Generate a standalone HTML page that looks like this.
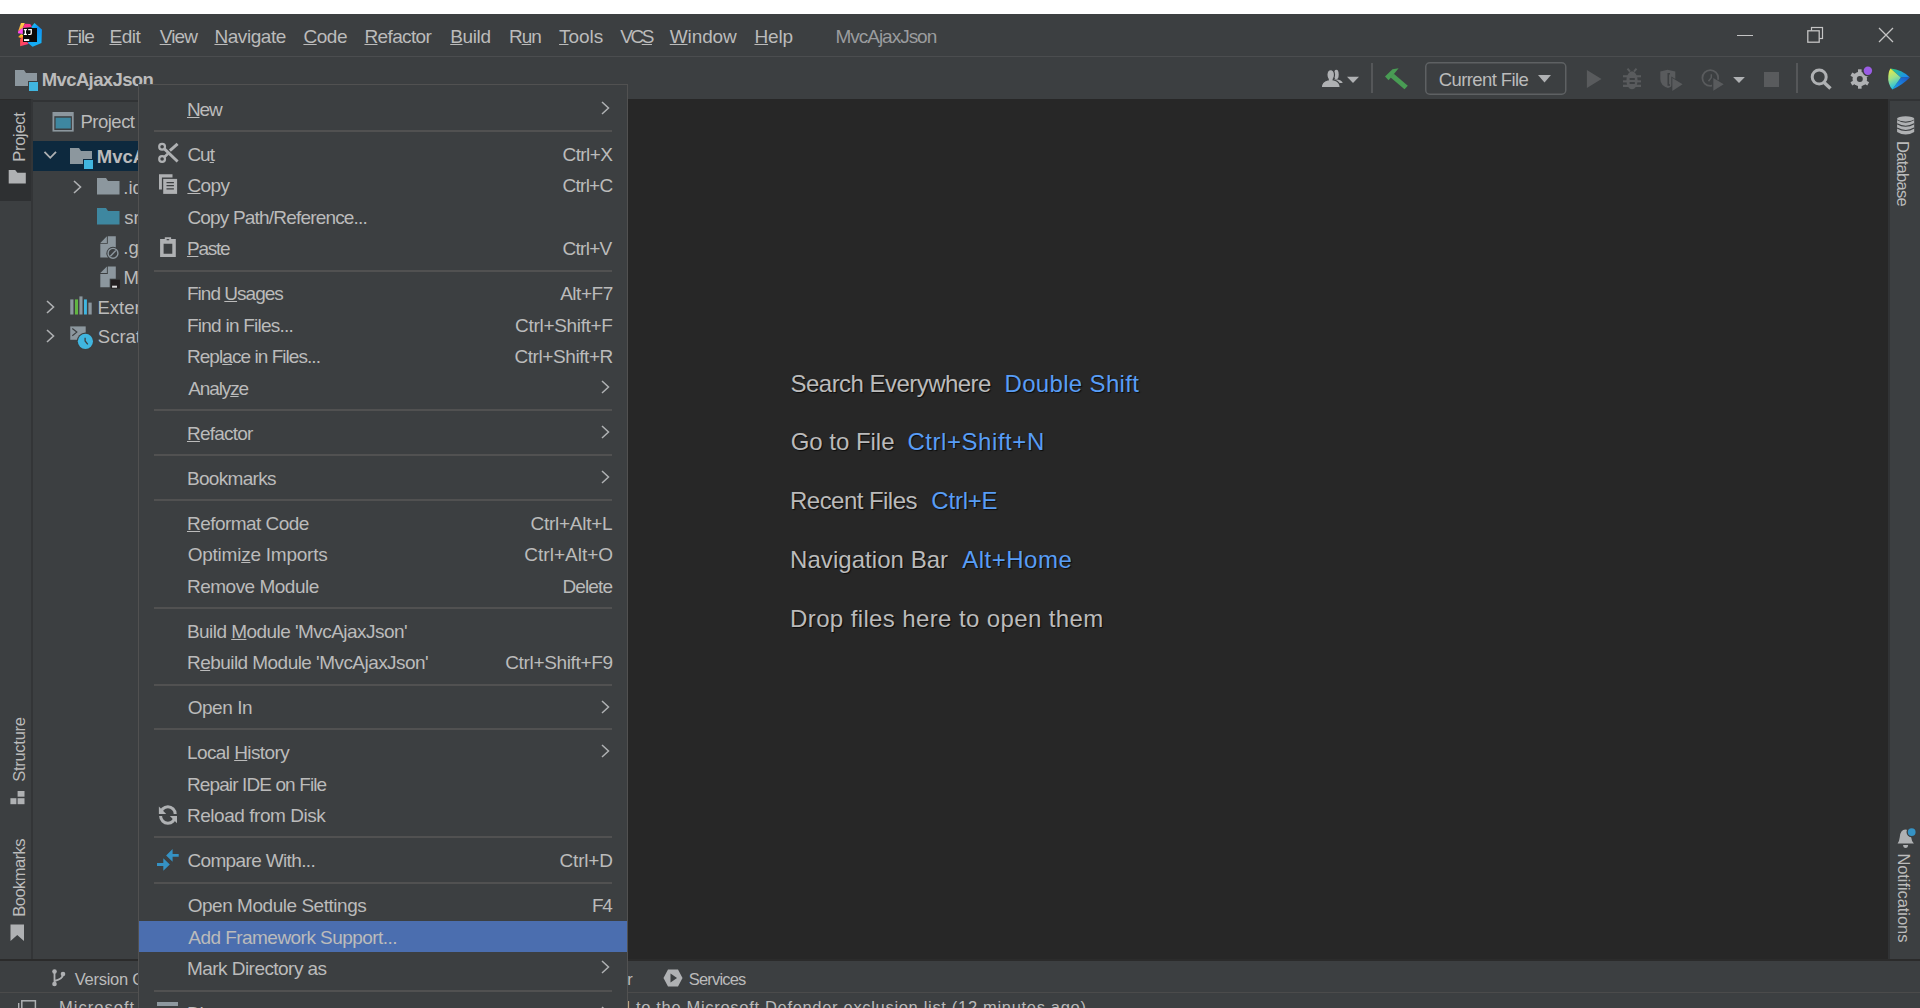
<!DOCTYPE html>
<html><head><meta charset="utf-8"><style>
html,body{margin:0;padding:0}
body{width:1920px;height:1008px;overflow:hidden;position:relative;background:#3c3f41;font-family:'Liberation Sans', sans-serif}
.t{position:absolute;white-space:pre}
u{text-decoration:underline;text-underline-offset:1px;text-decoration-thickness:1.2px}
svg{overflow:visible}
</style></head><body>
<div style="position:absolute;left:0px;top:0px;width:1920px;height:14px;background:#ffffff;"></div><div style="position:absolute;left:0px;top:56px;width:1920px;height:1px;background:#4b4d4f;"></div><div style="position:absolute;left:400px;top:99px;width:1489px;height:860px;background:#272727;"></div><div style="position:absolute;left:0px;top:99px;width:31px;height:1px;background:#2b2b2b;"></div><div style="position:absolute;left:0px;top:100px;width:31px;height:101px;background:#2e3032;"></div><div style="position:absolute;left:31px;top:99px;width:2px;height:860px;background:#333537;"></div><div style="position:absolute;left:33px;top:100px;width:400px;height:2px;background:#313335;"></div><div style="position:absolute;left:1888px;top:99px;width:2px;height:860px;background:#313335;"></div><div style="position:absolute;left:1890px;top:99px;width:30px;height:2px;background:#313335;"></div><div style="position:absolute;left:0px;top:959px;width:1920px;height:2px;background:#2b2b2b;"></div><div style="position:absolute;left:0px;top:992px;width:1920px;height:1px;background:#4b4b4b;"></div><svg style="position:absolute;left:16px;top:21px;" width="28" height="28" viewBox="16 21 28 28"><defs><linearGradient id="lg1" x1="0" y1="0" x2="0" y2="1"><stop offset="0" stop-color="#ffd04a"/><stop offset="1" stop-color="#ff9a3c"/></linearGradient><linearGradient id="lg2" x1="0" y1="0" x2="0" y2="1"><stop offset="0" stop-color="#ffe01b"/><stop offset="1" stop-color="#ff6a2a"/></linearGradient><linearGradient id="lg3" x1="0" y1="0" x2="1" y2="1"><stop offset="0" stop-color="#ff5a36"/><stop offset="1" stop-color="#ff318c"/></linearGradient><linearGradient id="lg4" x1="0" y1="0" x2="0.3" y2="1"><stop offset="0" stop-color="#22d8f6"/><stop offset="0.4" stop-color="#0d8ff5"/><stop offset="1" stop-color="#16b0f5"/></linearGradient></defs><path d="M31.9 26.3 L34.5 23 L41.9 29.5 L41.5 43 L32.6 46.8 L27.9 43 Z" fill="url(#lg4)"/><path d="M21 23 L24.8 23 L22.8 28.1 L17.9 31.8 Z" fill="url(#lg1)"/><path d="M24.8 23.7 L30.2 23.9 L31.9 26.8 L22.8 28.1 Z" fill="#ff318c"/><path d="M17.9 31.8 L22.8 27.8 L22.8 33.9 L18.1 33.2 Z" fill="#ff45ed"/><path d="M18.1 36.9 L21.1 34.2 L23 34.9 L23 38.9 Z" fill="url(#lg2)"/><path d="M20.1 38.9 L23 36.9 L27.9 43 L28.5 44 L20.1 46.3 Z" fill="url(#lg3)"/><rect x="23" y="28" width="14" height="14" fill="#0c0a0a"/><path d="M23.8 29 H26.9 V30.2 H26 V33.8 H26.9 V35 H23.8 V33.8 H24.7 V30.2 H23.8 Z" fill="#fff"/><path d="M28.2 29 H31.9 V33.2 Q31.9 35.1 30 35.1 H28.2 V33.9 H29.9 Q30.6 33.9 30.6 33.1 V30.2 H28.2 Z" fill="#fff"/><rect x="24" y="39.1" width="5.2" height="1.9" fill="#fff"/></svg><div class="t" style="left:67.32px;top:26.92px;font-size:19px;line-height:19px;letter-spacing:-1.066px;color:#bbbbbb;font-weight:normal;"><u>F</u>ile</div><div class="t" style="left:109.47px;top:26.92px;font-size:19px;line-height:19px;letter-spacing:-0.484px;color:#bbbbbb;font-weight:normal;"><u>E</u>dit</div><div class="t" style="left:159.71px;top:26.92px;font-size:19px;line-height:19px;letter-spacing:-0.818px;color:#bbbbbb;font-weight:normal;"><u>V</u>iew</div><div class="t" style="left:214.47px;top:26.92px;font-size:19px;line-height:19px;letter-spacing:-0.450px;color:#bbbbbb;font-weight:normal;"><u>N</u>avigate</div><div class="t" style="left:303.41px;top:26.92px;font-size:19px;line-height:19px;letter-spacing:-0.435px;color:#bbbbbb;font-weight:normal;"><u>C</u>ode</div><div class="t" style="left:364.47px;top:26.92px;font-size:19px;line-height:19px;letter-spacing:-0.632px;color:#bbbbbb;font-weight:normal;"><u>R</u>efactor</div><div class="t" style="left:450.22px;top:26.92px;font-size:19px;line-height:19px;letter-spacing:-0.372px;color:#bbbbbb;font-weight:normal;"><u>B</u>uild</div><div class="t" style="left:508.97px;top:26.92px;font-size:19px;line-height:19px;letter-spacing:-1.080px;color:#bbbbbb;font-weight:normal;">R<u>u</u>n</div><div class="t" style="left:559.09px;top:26.92px;font-size:19px;line-height:19px;letter-spacing:-0.063px;color:#bbbbbb;font-weight:normal;"><u>T</u>ools</div><div class="t" style="left:620.21px;top:26.92px;font-size:19px;line-height:19px;letter-spacing:-2.440px;color:#bbbbbb;font-weight:normal;">VC<u>S</u></div><div class="t" style="left:669.76px;top:26.92px;font-size:19px;line-height:19px;letter-spacing:-0.107px;color:#bbbbbb;font-weight:normal;"><u>W</u>indow</div><div class="t" style="left:754.47px;top:26.92px;font-size:19px;line-height:19px;letter-spacing:-0.125px;color:#bbbbbb;font-weight:normal;"><u>H</u>elp</div><div class="t" style="left:835.47px;top:26.92px;font-size:19px;line-height:19px;letter-spacing:-1.016px;color:#9a9c9e;font-weight:normal;">MvcAjaxJson</div><div style="position:absolute;left:1737px;top:35px;width:16px;height:1.3px;background:#c4c4c4;"></div><svg style="position:absolute;left:1807px;top:27px;" width="17" height="17" viewBox="0 0 17 17"><rect x="4.5" y="0.5" width="11" height="11" fill="none" stroke="#c4c4c4" stroke-width="1.2"/><rect x="0.8" y="3.8" width="11.4" height="11.4" fill="#3c3f41" stroke="#c4c4c4" stroke-width="1.3"/></svg><svg style="position:absolute;left:1878px;top:27px;" width="16" height="16" viewBox="0 0 16 16"><path d="M1 1 L15 15 M15 1 L1 15" stroke="#c4c4c4" stroke-width="1.3"/></svg><svg style="position:absolute;left:15px;top:70px;" width="24" height="22" viewBox="0 0 24 22"><path d="M0 0 H9 L11 3 H22 V16 H0 Z" fill="#8c979e"/><rect x="13" y="11" width="11" height="11" fill="#3c3f41"/><rect x="14" y="12" width="9" height="9" fill="#40b6e0"/></svg><div class="t" style="left:41.75px;top:70.74px;font-size:18.5px;line-height:18.5px;letter-spacing:-0.620px;color:#bbbbbb;font-weight:bold;">MvcAjaxJson</div><svg style="position:absolute;left:1318px;top:66px;" width="30" height="24" viewBox="1318 66 30 24"><ellipse cx="1336.3" cy="74.5" rx="2.4" ry="4.8" fill="#afb1b3"/><path d="M1334 79.3 Q1342 79.6 1342.7 83 L1336 83 Z" fill="#afb1b3"/><ellipse cx="1330.7" cy="74.8" rx="3.8" ry="5.1" fill="#afb1b3" stroke="#3c3f41" stroke-width="1.2"/><path d="M1321.2 87.7 Q1321.4 81.4 1327.5 80 L1334 80 Q1340.1 81.4 1340.3 87.7 Z" fill="#afb1b3" stroke="#3c3f41" stroke-width="1.2"/><rect x="1328.8" y="77.5" width="3.8" height="3.6" fill="#afb1b3"/></svg><svg style="position:absolute;left:1346px;top:76px;" width="14" height="8" viewBox="1346 76 14 8"><path d="M1347 76.8 H1359 L1353 82.9 Z" fill="#afb1b3"/></svg><div style="position:absolute;left:1371.2px;top:63px;width:1.8px;height:30px;background:#555759;"></div><svg style="position:absolute;left:1383px;top:66px;" width="27" height="25" viewBox="1383 66 27 25"><path d="M1385 76.6 L1392.5 69.2 L1398.6 68.3 L1395.2 72.6 L1388.6 80.3 Z" fill="#499c54"/><path d="M1390.3 77.3 L1393.8 73.8 L1407.8 85.8 L1404.5 89.3 Z" fill="#499c54"/></svg><svg style="position:absolute;left:1425px;top:62px;" width="142" height="33" viewBox="0 0 142 33"><rect x="0.75" y="0.75" width="140" height="31.5" rx="4" ry="4" fill="none" stroke="#5e6163" stroke-width="1.5"/></svg><div class="t" style="left:1438.66px;top:71.14px;font-size:18.5px;line-height:18.5px;letter-spacing:-0.586px;color:#bbbbbb;font-weight:normal;">Current File</div><svg style="position:absolute;left:1537px;top:74px;" width="15" height="10" viewBox="1537 74 15 10"><path d="M1538 75 H1551 L1544.5 82.6 Z" fill="#afb1b3"/></svg><svg style="position:absolute;left:1585px;top:69px;" width="19" height="21" viewBox="1585 69 19 21"><path d="M1586.9 70 L1601.5 78.9 L1586.9 88.1 Z" fill="#595b5d"/></svg><svg style="position:absolute;left:1621px;top:67px;" width="22" height="24" viewBox="1621 67 22 24"><path d="M1627.5 68.6 L1630 71.6 M1636.5 68.6 L1634 71.6" stroke="#595b5d" stroke-width="2"/><ellipse cx="1632" cy="80.3" rx="5.6" ry="9" fill="#595b5d"/><rect x="1623" y="75.2" width="18" height="2.1" fill="#595b5d"/><rect x="1623" y="80.3" width="18" height="2.1" fill="#595b5d"/><rect x="1623" y="84.7" width="18" height="2.3" fill="#595b5d"/><rect x="1629.6" y="78" width="5.2" height="2" fill="#3c3f41"/><rect x="1629.6" y="82" width="5.2" height="2" fill="#3c3f41"/></svg><svg style="position:absolute;left:1659px;top:68px;" width="25" height="24" viewBox="1659 68 25 24"><path d="M1660.3 71.5 L1667.5 69.8 L1675.3 71.5 V79 Q1675 85.5 1668 88 Q1660.3 85.5 1660.3 79 Z" fill="#595b5d"/><path d="M1670 73.8 H1668.3 V85 H1670" stroke="#3c3f41" stroke-width="1.6" fill="none"/><path d="M1671.3 76.6 L1684 84.3 L1671.3 92.2 Z" fill="#3c3f41"/><path d="M1672.3 78 L1682.6 84.3 L1672.3 91 Z" fill="#595b5d"/></svg><svg style="position:absolute;left:1700px;top:68px;" width="25" height="24" viewBox="1700 68 25 24"><circle cx="1710.3" cy="78" r="7.9" fill="none" stroke="#595b5d" stroke-width="1.8"/><path d="M1711.3 74.2 V77.6 L1708.5 81.2" stroke="#595b5d" stroke-width="1.5" fill="none"/><path d="M1712 76.3 L1725.3 84.3 L1712 92.3 Z" fill="#3c3f41"/><path d="M1713.3 78 L1723.7 84.3 L1713.3 90.7 Z" fill="#595b5d"/></svg><svg style="position:absolute;left:1732px;top:76px;" width="14" height="8" viewBox="1732 76 14 8"><path d="M1733.1 77 H1744.9 L1739 82.9 Z" fill="#afb1b3"/></svg><div style="position:absolute;left:1764.3px;top:71.5px;width:15.2px;height:15px;background:#595b5d;"></div><div style="position:absolute;left:1796.2px;top:63px;width:1.8px;height:30px;background:#555759;"></div><svg style="position:absolute;left:1808px;top:66px;" width="26" height="26" viewBox="1808 66 26 26"><circle cx="1819.2" cy="77" r="7" fill="none" stroke="#afb1b3" stroke-width="3"/><path d="M1823.8 82.2 L1830.5 88.6" stroke="#afb1b3" stroke-width="3.4"/></svg><svg style="position:absolute;left:1848px;top:67px;" width="24" height="24" viewBox="1848 67 24 24"><rect x="1858" y="69.3" width="3.6" height="19.4" fill="#afb1b3" transform="rotate(0 1859.8 79)"/><rect x="1858" y="69.3" width="3.6" height="19.4" fill="#afb1b3" transform="rotate(60 1859.8 79)"/><rect x="1858" y="69.3" width="3.6" height="19.4" fill="#afb1b3" transform="rotate(120 1859.8 79)"/><circle cx="1859.8" cy="79" r="7.3" fill="#afb1b3"/><circle cx="1859.8" cy="79" r="3" fill="#3c3f41"/><circle cx="1867.9" cy="70.7" r="5.6" fill="#3c3f41"/><circle cx="1867.9" cy="70.7" r="4.2" fill="#9b5de5"/></svg><svg style="position:absolute;left:1886px;top:66px;" width="26" height="26" viewBox="1886 66 26 26"><defs><linearGradient id="cg1" x1="0" y1="0" x2="0.3" y2="1"><stop offset="0" stop-color="#f3ec3a"/><stop offset="0.5" stop-color="#9fe28a"/><stop offset="1" stop-color="#1bbde8"/></linearGradient><linearGradient id="cg2" x1="0" y1="0" x2="1" y2="0.6"><stop offset="0" stop-color="#27d17f"/><stop offset="1" stop-color="#1b8cf0"/></linearGradient><linearGradient id="cg3" x1="0" y1="1" x2="1" y2="0"><stop offset="0" stop-color="#1aa5ee"/><stop offset="1" stop-color="#1c55c8"/></linearGradient></defs><path d="M1890.6 68.6 Q1902 69.5 1909.8 77.6 L1900.8 77.6 Z" fill="url(#cg2)"/><path d="M1909.8 77.6 Q1902 85.5 1892.4 89.5 L1900.8 77.6 Z" fill="url(#cg3)"/><path d="M1890.6 68.6 L1900.8 77.6 L1892.4 89.5 Q1887.5 84 1888.3 76 Q1888.8 70.5 1890.6 68.6 Z" fill="url(#cg1)"/></svg><div class="t" style="left:-5.75px;top:127.71px;font-size:16.5px;line-height:16.5px;letter-spacing:-0.331px;color:#bbbbbb;transform-origin:25.35px 8.29px;transform:rotate(-90deg)">Project</div><svg style="position:absolute;left:7px;top:168px;" width="21" height="18" viewBox="7 168 21 18"><path d="M8.7 170 H15.2 L17.4 172.8 H25.8 V183.5 H8.7 Z" fill="#afb1b3"/></svg><div class="t" style="left:-13.49px;top:741.36px;font-size:16.5px;line-height:16.5px;letter-spacing:-0.277px;color:#bbbbbb;transform-origin:32.49px 8.29px;transform:rotate(-90deg)">Structure</div><svg style="position:absolute;left:8px;top:788px;" width="20" height="20" viewBox="8 788 20 20"><rect x="17.6" y="791" width="6.9" height="5.7" fill="#afb1b3"/><rect x="10.4" y="798.2" width="6" height="6" fill="#afb1b3"/><rect x="17.6" y="798.2" width="6.9" height="6" fill="#afb1b3"/></svg><div class="t" style="left:-20.40px;top:869.06px;font-size:16.5px;line-height:16.5px;letter-spacing:-0.553px;color:#bbbbbb;transform-origin:39.40px 8.29px;transform:rotate(-90deg)">Bookmarks</div><svg style="position:absolute;left:10px;top:924px;" width="15" height="18" viewBox="0 0 15 18"><path d="M0.5 0.5 H14 V17 L7.25 11 L0.5 17 Z" fill="#afb1b3"/></svg><svg style="position:absolute;left:1894px;top:114px;" width="24" height="24" viewBox="1894 114 24 24"><path d="M1897.1 118.8 V132 Q1905.65 137 1914.2 132 V118.8 Z" fill="#afb1b3"/><path d="M1897.1 119.6 Q1905.65 124.6 1914.2 119.6 M1897.1 123.8 Q1905.65 128.8 1914.2 123.8 M1897.1 128 Q1905.65 133 1914.2 128" fill="none" stroke="#3c3f41" stroke-width="1.1"/><ellipse cx="1905.65" cy="118.8" rx="8.55" ry="2.5" fill="#afb1b3"/></svg><div class="t" style="left:1870.30px;top:166.16px;font-size:16.5px;line-height:16.5px;letter-spacing:-0.732px;color:#bbbbbb;transform-origin:33.20px 8.29px;transform:rotate(90deg)">Database</div><svg style="position:absolute;left:1894px;top:824px;" width="24" height="26" viewBox="1894 824 24 26"><path d="M1897.6 843.4 Q1899.3 841.5 1899.8 837 Q1900.3 829.8 1905.4 829.5 Q1910.6 829.8 1911.1 837 Q1911.6 841.5 1913.9 843.4 Z" fill="#afb1b3"/><path d="M1903.1 844.9 H1908.1 Q1908 847.9 1905.6 847.9 Q1903.2 847.9 1903.1 844.9 Z" fill="#afb1b3"/><circle cx="1911.7" cy="832.1" r="5.2" fill="#3c3f41"/><circle cx="1911.7" cy="832.1" r="3.9" fill="#3592c4"/></svg><div class="t" style="left:1858.60px;top:889.56px;font-size:16.5px;line-height:16.5px;letter-spacing:-0.072px;color:#bbbbbb;transform-origin:44.90px 8.29px;transform:rotate(90deg)">Notifications</div><svg style="position:absolute;left:50px;top:110px;" width="26" height="24" viewBox="50 110 26 24"><rect x="52.5" y="112" width="21.2" height="19.6" fill="#8c979e"/><rect x="54.3" y="116.2" width="17.6" height="13.8" fill="#3c3f41"/><rect x="55.6" y="117.7" width="15.2" height="10.8" fill="#3e87a0"/></svg><div class="t" style="left:80.52px;top:112.84px;font-size:18.5px;line-height:18.5px;letter-spacing:-0.515px;color:#bbbbbb;font-weight:normal;">Project</div><div style="position:absolute;left:33px;top:141px;width:400px;height:30px;background:#0d293e;"></div><svg style="position:absolute;left:42px;top:149px;" width="17" height="12" viewBox="42 149 17 12"><path d="M44.5 151.8 L50.25 157.8 L56 151.8" fill="none" stroke="#afb1b3" stroke-width="1.8"/></svg><svg style="position:absolute;left:70px;top:148px;" width="24" height="22" viewBox="0 0 24 22"><path d="M0 0 H9 L11 3 H22 V16 H0 Z" fill="#8c979e"/><rect x="13" y="11" width="11" height="11" fill="#0d293e"/><rect x="14" y="12" width="9" height="9" fill="#40b6e0"/></svg><div class="t" style="left:96.75px;top:147.64px;font-size:18.5px;line-height:18.5px;letter-spacing:0.000px;color:#bbbbbb;font-weight:bold;">MvcAjaxJson</div><svg style="position:absolute;left:73px;top:180px;" width="9" height="14" viewBox="0 0 9 14"><path d="M1 1 L7.5 7 L1 13" fill="none" stroke="#afb1b3" stroke-width="1.6"/></svg><svg style="position:absolute;left:97px;top:178px;" width="23" height="17" viewBox="0 0 23 17"><path d="M0 0 H9 L11 3 H22.5 V16.5 H0 Z" fill="#8c979e"/></svg><div class="t" style="left:123.36px;top:178.54px;font-size:18.5px;line-height:18.5px;letter-spacing:0.000px;color:#bbbbbb;font-weight:normal;">.idea</div><svg style="position:absolute;left:97px;top:208px;" width="23" height="17" viewBox="0 0 23 17"><path d="M0 0 H9 L11 3 H22.5 V16.5 H0 Z" fill="#3e87a0"/></svg><div class="t" style="left:124.24px;top:208.54px;font-size:18.5px;line-height:18.5px;letter-spacing:0.000px;color:#bbbbbb;font-weight:normal;">src</div><svg style="position:absolute;left:98px;top:234px;" width="24" height="26" viewBox="98 234 24 26"><path d="M107.8 236.3 H115.8 V257.6 H100.3 V243.8 H107.8 Z" fill="#8c979e"/><path d="M100.3 242.9 L106.9 236.3 V242.9 Z" fill="#8c979e"/><circle cx="113" cy="253.3" r="6.6" fill="#3c3f41"/><circle cx="113" cy="253.3" r="4.9" fill="none" stroke="#8c979e" stroke-width="1.4"/><path d="M110.4 256.2 L115.8 250.4" stroke="#8c979e" stroke-width="1.4"/></svg><div class="t" style="left:123.36px;top:238.54px;font-size:18.5px;line-height:18.5px;letter-spacing:0.000px;color:#bbbbbb;font-weight:normal;">.gitignore</div><svg style="position:absolute;left:98px;top:264px;" width="24" height="26" viewBox="98 264 24 26"><path d="M107.8 266.5 H115.8 V287.2 H100.3 V274 H107.8 Z" fill="#8c979e"/><path d="M100.3 273.1 L106.9 266.5 V273.1 Z" fill="#8c979e"/><rect x="109.7" y="278.7" width="11.2" height="10.9" fill="#3c3f41"/><rect x="110.7" y="279.7" width="9.2" height="8.9" fill="#231f20"/><rect x="112.1" y="285.7" width="4.9" height="2" fill="#ddd"/></svg><div class="t" style="left:123.52px;top:268.54px;font-size:18.5px;line-height:18.5px;letter-spacing:0.000px;color:#bbbbbb;font-weight:normal;">MvcAjaxJson.iml</div><svg style="position:absolute;left:46px;top:300px;" width="9" height="14" viewBox="0 0 9 14"><path d="M1 1 L7.5 7 L1 13" fill="none" stroke="#afb1b3" stroke-width="1.6"/></svg><svg style="position:absolute;left:68px;top:294px;" width="26" height="22" viewBox="68 294 26 22"><rect x="70.25" y="299.4" width="3.2" height="15.1" fill="#8c979e"/><rect x="75" y="299.4" width="3" height="15.1" fill="#62b543"/><rect x="79.4" y="296.4" width="3.1" height="18.1" fill="#8c979e"/><rect x="84" y="299.4" width="2.9" height="15.1" fill="#40b6e0"/><rect x="88.4" y="302.6" width="3.3" height="11.9" fill="#8c979e"/></svg><div class="t" style="left:97.52px;top:298.64px;font-size:18.5px;line-height:18.5px;letter-spacing:0.000px;color:#bbbbbb;font-weight:normal;">External Libraries</div><svg style="position:absolute;left:46px;top:329px;" width="9" height="14" viewBox="0 0 9 14"><path d="M1 1 L7.5 7 L1 13" fill="none" stroke="#afb1b3" stroke-width="1.6"/></svg><svg style="position:absolute;left:68px;top:324px;" width="30" height="30" viewBox="68 324 30 30"><rect x="70.25" y="326.4" width="15.45" height="13.4" fill="#8c979e"/><path d="M72.3 328.5 L76.8 332.1 L72.3 335.7" fill="none" stroke="#3c3f41" stroke-width="1.2"/><circle cx="85.4" cy="341.3" r="8.7" fill="#3c3f41"/><circle cx="85.4" cy="341.3" r="7.6" fill="#40b6e0"/><path d="M85.1 337.7 V341 L87.8 344.3" fill="none" stroke="#3c3f41" stroke-width="1.3"/></svg><div class="t" style="left:97.84px;top:328.34px;font-size:18.5px;line-height:18.5px;letter-spacing:0.000px;color:#bbbbbb;font-weight:normal;">Scratches and Consoles</div><div class="t" style="left:790.55px;top:371.58px;font-size:24px;line-height:24px;letter-spacing:-0.535px;color:#bbbbbb;font-weight:normal;text-shadow:1px 1px 1px rgba(0,0,0,0.7)">Search Everywhere</div><div class="t" style="left:1004.46px;top:371.58px;font-size:24px;line-height:24px;letter-spacing:0.342px;color:#589df6;font-weight:normal;text-shadow:1px 1px 1px rgba(0,0,0,0.7)">Double Shift</div><div class="t" style="left:790.68px;top:430.18px;font-size:24px;line-height:24px;letter-spacing:-0.022px;color:#bbbbbb;font-weight:normal;text-shadow:1px 1px 1px rgba(0,0,0,0.7)">Go to File</div><div class="t" style="left:907.45px;top:430.18px;font-size:24px;line-height:24px;letter-spacing:0.552px;color:#589df6;font-weight:normal;text-shadow:1px 1px 1px rgba(0,0,0,0.7)">Ctrl+Shift+N</div><div class="t" style="left:790.06px;top:489.08px;font-size:24px;line-height:24px;letter-spacing:-0.545px;color:#bbbbbb;font-weight:normal;text-shadow:1px 1px 1px rgba(0,0,0,0.7)">Recent Files</div><div class="t" style="left:931.35px;top:489.08px;font-size:24px;line-height:24px;letter-spacing:-0.231px;color:#589df6;font-weight:normal;text-shadow:1px 1px 1px rgba(0,0,0,0.7)">Ctrl+E</div><div class="t" style="left:790.06px;top:547.98px;font-size:24px;line-height:24px;letter-spacing:0.050px;color:#bbbbbb;font-weight:normal;text-shadow:1px 1px 1px rgba(0,0,0,0.7)">Navigation Bar</div><div class="t" style="left:962.15px;top:547.98px;font-size:24px;line-height:24px;letter-spacing:0.519px;color:#589df6;font-weight:normal;text-shadow:1px 1px 1px rgba(0,0,0,0.7)">Alt+Home</div><div class="t" style="left:790.06px;top:606.68px;font-size:24px;line-height:24px;letter-spacing:0.381px;color:#bbbbbb;font-weight:normal;text-shadow:1px 1px 1px rgba(0,0,0,0.7)">Drop files here to open them</div><svg style="position:absolute;left:52px;top:969px;" width="14" height="18" viewBox="0 0 14 18"><circle cx="2.5" cy="2.5" r="2.3" fill="#afb1b3"/><circle cx="11" cy="5" r="2.3" fill="#afb1b3"/><circle cx="2.5" cy="15" r="2.3" fill="#afb1b3"/><path d="M2.5 2.5 V15 M11 5 Q11 10 2.5 12" stroke="#afb1b3" stroke-width="1.8" fill="none"/></svg><div class="t" style="left:74.71px;top:971.03px;font-size:16.5px;line-height:16.5px;letter-spacing:-0.254px;color:#bbbbbb;font-weight:normal;">Version Control</div><div class="t" style="left:627.32px;top:971.03px;font-size:16.5px;line-height:16.5px;letter-spacing:0.000px;color:#bbbbbb;font-weight:normal;">r</div><svg style="position:absolute;left:663px;top:969px;" width="20" height="18" viewBox="0 0 20 18"><path d="M5 0.5 H15 L19.5 9 L15 17.5 H5 L0.5 9 Z" fill="#afb1b3"/><path d="M7.5 4.5 L14 9 L7.5 13.5 Z" fill="#3c3f41"/></svg><div class="t" style="left:688.76px;top:970.93px;font-size:16.5px;line-height:16.5px;letter-spacing:-0.816px;color:#bbbbbb;font-weight:normal;">Services</div><svg style="position:absolute;left:16px;top:998px;" width="24" height="12" viewBox="16 998 24 12"><rect x="21.8" y="1000.8" width="13.6" height="13.6" fill="none" stroke="#afb1b3" stroke-width="1.5"/><rect x="18" y="1003" width="1.4" height="10" fill="#afb1b3"/></svg><div class="t" style="left:59.05px;top:999.23px;font-size:16.5px;line-height:16.5px;letter-spacing:1.025px;color:#bbbbbb;font-weight:normal;">Microsoft</div><div class="t" style="left:620.84px;top:999.23px;font-size:16.5px;line-height:16.5px;letter-spacing:0.682px;color:#bbbbbb;font-weight:normal;">d to the Microsoft Defender exclusion list (12 minutes ago)</div><div style="position:absolute;left:138px;top:84px;width:490px;height:924px;background:#3c3f41;box-sizing:border-box;border:1px solid #515151;border-bottom:none"></div><div class="t" style="left:186.97px;top:99.92px;font-size:19px;line-height:19px;letter-spacing:-1.175px;color:#bbbbbb;font-weight:normal;"><u>N</u>ew</div><svg style="position:absolute;left:601px;top:101px;" width="9" height="14" viewBox="0 0 9 14"><path d="M1 1 L7.5 7 L1 13" fill="none" stroke="#afb1b3" stroke-width="1.5"/></svg><div style="position:absolute;left:154px;top:130px;width:458px;height:2px;background:#515151;"></div><div class="t" style="left:187.41px;top:144.92px;font-size:19px;line-height:19px;letter-spacing:-1.038px;color:#bbbbbb;font-weight:normal;">Cu<u>t</u></div><div class="t" style="left:562.51px;top:144.92px;font-size:19px;line-height:19px;letter-spacing:-0.595px;color:#bbbbbb;font-weight:normal;">Ctrl+X</div><div class="t" style="left:187.41px;top:176.42px;font-size:19px;line-height:19px;letter-spacing:-0.616px;color:#bbbbbb;font-weight:normal;"><u>C</u>opy</div><div class="t" style="left:562.51px;top:176.42px;font-size:19px;line-height:19px;letter-spacing:-0.731px;color:#bbbbbb;font-weight:normal;">Ctrl+C</div><div class="t" style="left:187.41px;top:207.92px;font-size:19px;line-height:19px;letter-spacing:-0.813px;color:#bbbbbb;font-weight:normal;">Copy Path/Reference...</div><div class="t" style="left:186.97px;top:239.42px;font-size:19px;line-height:19px;letter-spacing:-1.237px;color:#bbbbbb;font-weight:normal;"><u>P</u>aste</div><div class="t" style="left:562.51px;top:239.42px;font-size:19px;line-height:19px;letter-spacing:-0.705px;color:#bbbbbb;font-weight:normal;">Ctrl+V</div><div style="position:absolute;left:154px;top:270px;width:458px;height:2px;background:#515151;"></div><div class="t" style="left:186.97px;top:284.42px;font-size:19px;line-height:19px;letter-spacing:-0.981px;color:#bbbbbb;font-weight:normal;">Find <u>U</u>sages</div><div class="t" style="left:560.15px;top:284.42px;font-size:19px;line-height:19px;letter-spacing:-0.469px;color:#bbbbbb;font-weight:normal;">Alt+F7</div><div class="t" style="left:186.97px;top:315.92px;font-size:19px;line-height:19px;letter-spacing:-0.756px;color:#bbbbbb;font-weight:normal;">Find in Files...</div><div class="t" style="left:515.11px;top:315.92px;font-size:19px;line-height:19px;letter-spacing:-0.320px;color:#bbbbbb;font-weight:normal;">Ctrl+Shift+F</div><div class="t" style="left:186.97px;top:347.42px;font-size:19px;line-height:19px;letter-spacing:-0.945px;color:#bbbbbb;font-weight:normal;">Repl<u>a</u>ce in Files...</div><div class="t" style="left:514.41px;top:347.42px;font-size:19px;line-height:19px;letter-spacing:-0.414px;color:#bbbbbb;font-weight:normal;">Ctrl+Shift+R</div><div class="t" style="left:188.25px;top:378.92px;font-size:19px;line-height:19px;letter-spacing:-1.121px;color:#bbbbbb;font-weight:normal;">Analy<u>z</u>e</div><svg style="position:absolute;left:601px;top:380px;" width="9" height="14" viewBox="0 0 9 14"><path d="M1 1 L7.5 7 L1 13" fill="none" stroke="#afb1b3" stroke-width="1.5"/></svg><div style="position:absolute;left:154px;top:409px;width:458px;height:2px;background:#515151;"></div><div class="t" style="left:186.97px;top:423.92px;font-size:19px;line-height:19px;letter-spacing:-0.775px;color:#bbbbbb;font-weight:normal;"><u>R</u>efactor</div><svg style="position:absolute;left:601px;top:425px;" width="9" height="14" viewBox="0 0 9 14"><path d="M1 1 L7.5 7 L1 13" fill="none" stroke="#afb1b3" stroke-width="1.5"/></svg><div style="position:absolute;left:154px;top:454px;width:458px;height:2px;background:#515151;"></div><div class="t" style="left:186.97px;top:468.92px;font-size:19px;line-height:19px;letter-spacing:-0.676px;color:#bbbbbb;font-weight:normal;">Bookmarks</div><svg style="position:absolute;left:601px;top:470px;" width="9" height="14" viewBox="0 0 9 14"><path d="M1 1 L7.5 7 L1 13" fill="none" stroke="#afb1b3" stroke-width="1.5"/></svg><div style="position:absolute;left:154px;top:499px;width:458px;height:2px;background:#515151;"></div><div class="t" style="left:186.97px;top:513.92px;font-size:19px;line-height:19px;letter-spacing:-0.546px;color:#bbbbbb;font-weight:normal;"><u>R</u>eformat Code</div><div class="t" style="left:530.51px;top:513.92px;font-size:19px;line-height:19px;letter-spacing:-0.266px;color:#bbbbbb;font-weight:normal;">Ctrl+Alt+L</div><div class="t" style="left:187.70px;top:545.42px;font-size:19px;line-height:19px;letter-spacing:-0.237px;color:#bbbbbb;font-weight:normal;">Optimi<u>z</u>e Imports</div><div class="t" style="left:524.31px;top:545.42px;font-size:19px;line-height:19px;letter-spacing:0.012px;color:#bbbbbb;font-weight:normal;">Ctrl+Alt+O</div><div class="t" style="left:186.97px;top:576.92px;font-size:19px;line-height:19px;letter-spacing:-0.506px;color:#bbbbbb;font-weight:normal;">Remove Module</div><div class="t" style="left:562.47px;top:576.92px;font-size:19px;line-height:19px;letter-spacing:-0.870px;color:#bbbbbb;font-weight:normal;">Delete</div><div style="position:absolute;left:154px;top:607px;width:458px;height:2px;background:#515151;"></div><div class="t" style="left:186.97px;top:621.92px;font-size:19px;line-height:19px;letter-spacing:-0.548px;color:#bbbbbb;font-weight:normal;">Build <u>M</u>odule &#x27;MvcAjaxJson&#x27;</div><div class="t" style="left:186.97px;top:653.42px;font-size:19px;line-height:19px;letter-spacing:-0.548px;color:#bbbbbb;font-weight:normal;">R<u>e</u>build Module &#x27;MvcAjaxJson&#x27;</div><div class="t" style="left:505.21px;top:653.42px;font-size:19px;line-height:19px;letter-spacing:-0.340px;color:#bbbbbb;font-weight:normal;">Ctrl+Shift+F9</div><div style="position:absolute;left:154px;top:684px;width:458px;height:2px;background:#515151;"></div><div class="t" style="left:187.70px;top:698.42px;font-size:19px;line-height:19px;letter-spacing:-0.462px;color:#bbbbbb;font-weight:normal;">Open In</div><svg style="position:absolute;left:601px;top:700px;" width="9" height="14" viewBox="0 0 9 14"><path d="M1 1 L7.5 7 L1 13" fill="none" stroke="#afb1b3" stroke-width="1.5"/></svg><div style="position:absolute;left:154px;top:728px;width:458px;height:2px;background:#515151;"></div><div class="t" style="left:186.97px;top:743.42px;font-size:19px;line-height:19px;letter-spacing:-0.586px;color:#bbbbbb;font-weight:normal;">Local <u>H</u>istory</div><svg style="position:absolute;left:601px;top:744px;" width="9" height="14" viewBox="0 0 9 14"><path d="M1 1 L7.5 7 L1 13" fill="none" stroke="#afb1b3" stroke-width="1.5"/></svg><div class="t" style="left:186.97px;top:774.92px;font-size:19px;line-height:19px;letter-spacing:-0.886px;color:#bbbbbb;font-weight:normal;">Repair IDE on File</div><div class="t" style="left:186.97px;top:806.42px;font-size:19px;line-height:19px;letter-spacing:-0.456px;color:#bbbbbb;font-weight:normal;">Reload from Disk</div><div style="position:absolute;left:154px;top:836px;width:458px;height:2px;background:#515151;"></div><div class="t" style="left:187.41px;top:851.42px;font-size:19px;line-height:19px;letter-spacing:-0.641px;color:#bbbbbb;font-weight:normal;">Compare With...</div><div class="t" style="left:559.51px;top:851.42px;font-size:19px;line-height:19px;letter-spacing:-0.174px;color:#bbbbbb;font-weight:normal;">Ctrl+D</div><div style="position:absolute;left:154px;top:882px;width:458px;height:2px;background:#515151;"></div><div class="t" style="left:187.70px;top:896.42px;font-size:19px;line-height:19px;letter-spacing:-0.470px;color:#bbbbbb;font-weight:normal;">Open Module Settings</div><div class="t" style="left:592.07px;top:896.42px;font-size:19px;line-height:19px;letter-spacing:-1.425px;color:#bbbbbb;font-weight:normal;">F4</div><div style="position:absolute;left:139px;top:921px;width:488px;height:31px;background:#4b6eaf;"></div><div class="t" style="left:188.25px;top:927.92px;font-size:19px;line-height:19px;letter-spacing:-0.539px;color:#bbbbbb;font-weight:normal;">Add Framework Support...</div><div class="t" style="left:186.97px;top:959.42px;font-size:19px;line-height:19px;letter-spacing:-0.544px;color:#bbbbbb;font-weight:normal;">Mark Directory as</div><svg style="position:absolute;left:601px;top:960px;" width="9" height="14" viewBox="0 0 9 14"><path d="M1 1 L7.5 7 L1 13" fill="none" stroke="#afb1b3" stroke-width="1.5"/></svg><div style="position:absolute;left:154px;top:990px;width:458px;height:2px;background:#515151;"></div><div class="t" style="left:186.97px;top:1004.42px;font-size:19px;line-height:19px;letter-spacing:-1.090px;color:#bbbbbb;font-weight:normal;">Diagrams</div><svg style="position:absolute;left:601px;top:1006px;" width="9" height="14" viewBox="0 0 9 14"><path d="M1 1 L7.5 7 L1 13" fill="none" stroke="#afb1b3" stroke-width="1.5"/></svg><svg style="position:absolute;left:155px;top:141px;" width="26" height="24" viewBox="155 141 26 24"><circle cx="162.1" cy="146.8" r="2.9" fill="none" stroke="#afb1b3" stroke-width="2.2"/><circle cx="162.1" cy="159" r="2.9" fill="none" stroke="#afb1b3" stroke-width="2.2"/><path d="M164.4 148.9 L177.6 161.5" stroke="#afb1b3" stroke-width="2.9"/><path d="M164.4 157 L167.9 153.7" stroke="#afb1b3" stroke-width="2.6"/><path d="M169.9 150.6 L177.6 143.8" stroke="#afb1b3" stroke-width="2.9"/></svg><svg style="position:absolute;left:156px;top:172px;" width="24" height="24" viewBox="156 172 24 24"><path d="M159 189.6 V174.2 H172.5 V177.4 H161.9 V189.6 Z" fill="#afb1b3"/><rect x="163.2" y="178.9" width="13.9" height="15" fill="#afb1b3"/><path d="M166.5 182.6 H173.9 M166.5 185.7 H173.9 M166.5 188.8 H173.9" stroke="#3c3f41" stroke-width="1.3"/></svg><svg style="position:absolute;left:157px;top:235px;" width="22" height="24" viewBox="157 235 22 24"><path d="M160.1 239 H164.8 V237.2 H171.1 V239 H175.8 V256.9 H160.1 Z M163.6 243.7 V253.7 H172.3 V243.7 Z" fill="#afb1b3" fill-rule="evenodd"/><ellipse cx="167.9" cy="239.7" rx="1.5" ry="0.6" fill="#3c3f41"/></svg><svg style="position:absolute;left:155px;top:802px;" width="26" height="26" viewBox="155 802 26 26"><path d="M160.6 814 A7.3 7.3 0 0 1 175.2 814" fill="none" stroke="#afb1b3" stroke-width="3"/><path d="M158.9 806.6 V813.9 H166.2 Z" fill="#afb1b3"/><path d="M175.2 816 A7.3 7.3 0 0 1 160.6 816" fill="none" stroke="#afb1b3" stroke-width="3"/><path d="M177 816 V823.2 L169.8 816 Z" fill="#afb1b3"/></svg><svg style="position:absolute;left:155px;top:847px;" width="26" height="26" viewBox="155 847 26 26"><path d="M166.1 855.4 L172.6 849.1 L172.6 854 H178.7 V856.8 H172.6 L172.6 861.7 Z" fill="#3592c4"/><path d="M169.8 864.5 L163.3 858.2 V863.1 H157 V865.9 H163.3 V870.7 Z" fill="#3592c4"/></svg><svg style="position:absolute;left:157px;top:1002px;" width="22" height="10" viewBox="0 0 22 10"><rect x="0" y="0" width="21" height="4" fill="#8e989f"/></svg>
</body></html>
